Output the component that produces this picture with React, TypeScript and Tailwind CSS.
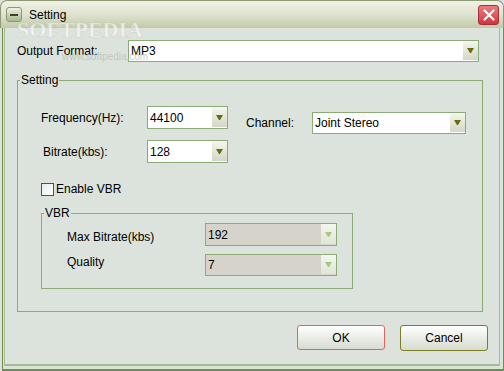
import React from "react";

const font = "font-['Liberation_Sans',Arial,sans-serif]";

function Arrow({ disabled }: { disabled?: boolean }) {
  return (
    <svg width="7" height="5" viewBox="0 0 7 5">
      <polygon points="0,0 7,0 4,5 3,5" fill={disabled ? "#a9c87a" : "#6b6b08"} />
    </svg>
  );
}

function Combo({ value, className, disabled }: { value: string; className: string; disabled?: boolean }) {
  return (
    <div
      className={`flex border border-[#8dab74] ${disabled ? "bg-[#d6d3cb]" : "bg-white"} ${className}`}
    >
      <div className="flex-1 flex items-center pl-[2px] text-[12px] text-black">{value}</div>
      <div
        className={`w-[15px] mb-[1px] flex items-center justify-center ${
          disabled
            ? "bg-gradient-to-b from-[#f4f6f0] to-[#dfe6d8]"
            : "bg-gradient-to-b from-[#f5f6ef] to-[#d2d7c6]"
        }`}
      >
        <Arrow disabled={disabled} />
      </div>
    </div>
  );
}

export default function App() {
  return (
    <div className={`relative w-[504px] h-[371px] overflow-hidden bg-[#dce3dc] ${font} text-[12px] text-black`}>
      {/* title bar */}
      <div className="h-[28px] flex items-center rounded-t-[7px] border-t border-x border-[#8d9a72] bg-gradient-to-b from-[#f0f1e6] via-[#dfe3cf] to-[#c2c9a8]">
        <div className="ml-[5px] w-[16px] h-[15px] rounded-[3px] border border-[#8a9a70] bg-gradient-to-b from-[#eef1e2] to-[#aab88c] flex items-center justify-center">
          <div className="w-[8px] h-[2px] bg-[#3c4030]" />
        </div>
        <span className="ml-[7px] text-[12px]">Setting</span>
        <div className="ml-auto mr-[4px] w-[21px] h-[20px] rounded-[3px] border border-[#a2303a] bg-gradient-to-b from-[#ee7a7e] to-[#d0343e] flex items-center justify-center">
          <svg width="12" height="12" viewBox="0 0 12 12">
            <path d="M1.5 1.5 L10.5 10.5 M10.5 1.5 L1.5 10.5" stroke="#fff" strokeWidth="2.2" strokeLinecap="round" />
          </svg>
        </div>
      </div>

      {/* window frame */}
      <div className="ml-[2px] h-[343px] border-x border-b-2 border-[#6f8c50]">
        <div className="ml-[1px] mr-[3px] h-[338px] border-x border-b-2 border-[#a3bd8e] bg-[#dce3dc]">
          <div className="flex items-center pl-[12px] pt-[12px]">
            <span className="w-[111px]">Output Format:</span>
            <Combo value="MP3" className="w-[351px] h-[22px]" />
          </div>

          <fieldset className="ml-[12px] mt-[11px] w-[466px] h-[239px] border border-[#8dab74]">
            <legend className="ml-[2px] px-[1px] leading-[14px]">Setting</legend>
            <div className="flex pl-[23px] pt-[19px]">
              <div className="flex flex-col gap-[11px]">
                <div className="flex items-center">
                  <span className="w-[106px]">Frequency(Hz):</span>
                  <Combo value="44100" className="w-[81px] h-[23px]" />
                </div>
                <div className="flex items-center">
                  <span className="w-[106px] pl-[2px]">Bitrate(kbs):</span>
                  <Combo value="128" className="w-[81px] h-[23px]" />
                </div>
              </div>
              <div className="flex items-center self-start ml-[18px] mt-[6px]">
                <span className="w-[66px]">Channel:</span>
                <Combo value="Joint Stereo" className="w-[154px] h-[22px]" />
              </div>
            </div>

            <div className="flex items-center pl-[23px] mt-[17px]">
              <div className="w-[13px] h-[13px] border border-[#2a5a8c] bg-gradient-to-br from-[#e8ecf0] to-white" />
              <span className="ml-[2px]">Enable VBR</span>
            </div>

            <fieldset className="ml-[23px] mt-[8px] w-[312px] h-[83px] border border-[#8dab74]">
              <legend className="ml-[2px] px-[1px] leading-[14px]">VBR</legend>
              <div className="flex flex-col gap-[7px] pl-[25px] pt-[3px]">
                <div className="flex items-center">
                  <span className="w-[138px] pt-[4px]">Max Bitrate(kbs)</span>
                  <Combo value="192" className="w-[132px] h-[23px]" disabled />
                </div>
                <div className="flex items-center">
                  <span className="w-[138px] pb-[6px]">Quality</span>
                  <Combo value="7" className="w-[132px] h-[22px]" disabled />
                </div>
              </div>
            </fieldset>
          </fieldset>

          <div className="flex justify-end items-start gap-[15px] pr-[11px] mt-[13px]">
            <button className="w-[88px] h-[25px] rounded-[3px] border border-[#e8625c] bg-gradient-to-b from-white to-[#d6dbcf] text-[12px]">
              OK
            </button>
            <button className="w-[88px] h-[26px] rounded-[3px] border border-[#7b7d22] bg-gradient-to-b from-white to-[#d6dbcf] text-[12px]">
              Cancel
            </button>
          </div>
        </div>
      </div>

      {/* watermark */}
      <div className="absolute left-[17px] top-[18px] pointer-events-none font-['Liberation_Serif',serif] font-bold text-[22px] leading-[24px] text-white/60 [-webkit-text-stroke:0.5px_rgba(200,205,195,0.8)]">
        SOFTPEDIA
      </div>
      <div className="absolute left-[62px] top-[49px] pointer-events-none text-[10px] text-[#b8bfb6]/80">
        www.softpedia.com
      </div>
    </div>
  );
}
